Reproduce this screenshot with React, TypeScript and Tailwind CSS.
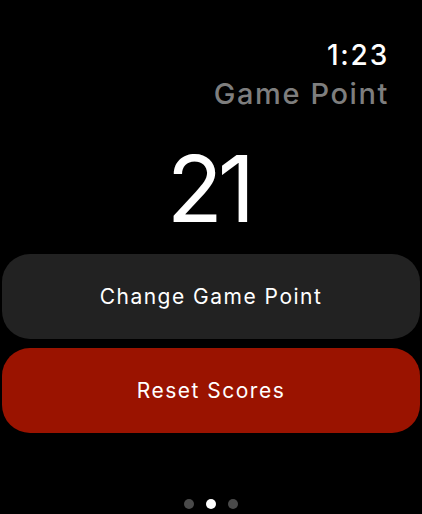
import React from "react";

export default function App() {
  return (
    <div
      className="w-[422px] h-[514px] bg-black text-white overflow-hidden flex flex-col"
      style={{ fontFamily: "Inter, 'Noto Sans', sans-serif" }}
    >
      <div className="flex flex-col items-end pr-[35px] pt-[38px]">
        <div className="text-[28px] leading-[34px] font-medium tracking-[1.8px] -mr-[2px]">1:23</div>
        <div className="text-[29px] leading-[36px] mt-[4px] font-medium tracking-[1.6px] -mr-[2px] text-[#7e7e7e]">Game Point</div>
      </div>
      <div className="flex justify-center mt-[32px]">
        <div className="text-[92px] leading-[90px] font-normal tracking-[-5px] -ml-[5px]">21</div>
      </div>
      <div className="flex flex-col gap-[9px] px-[2px] mt-[20px]">
        <button className="h-[85px] rounded-[28px] bg-[#222222] text-[21px] tracking-[1.5px] text-white">
          Change Game Point
        </button>
        <button className="h-[85px] rounded-[28px] bg-[#9a1300] text-[21px] tracking-[1.5px] text-white">
          Reset Scores
        </button>
      </div>
      <div className="flex-1" />
      <div className="flex justify-center gap-[12px] pb-[5px]">
        <div className="w-[10px] h-[10px] rounded-full bg-[#4a4a4a]" />
        <div className="w-[10px] h-[10px] rounded-full bg-white" />
        <div className="w-[10px] h-[10px] rounded-full bg-[#4a4a4a]" />
      </div>
    </div>
  );
}
